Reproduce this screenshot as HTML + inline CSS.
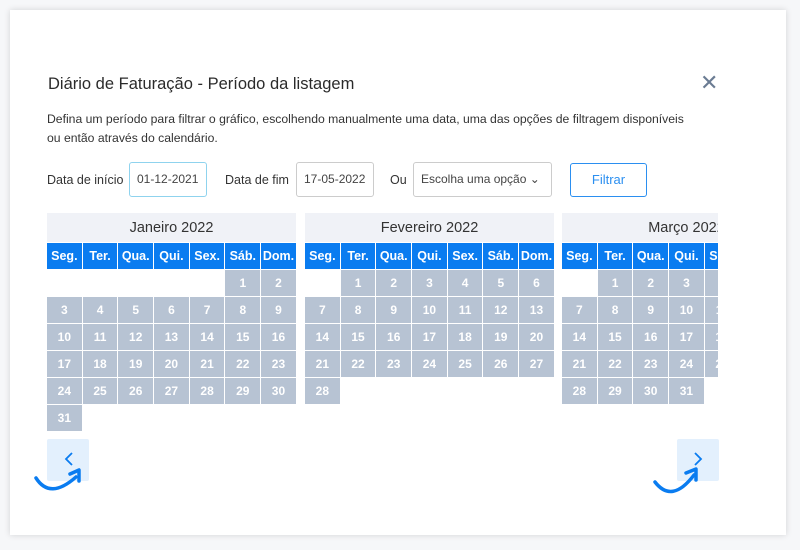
<!DOCTYPE html>
<html><head><meta charset="utf-8"><style>
*{box-sizing:border-box;margin:0;padding:0}
body{width:800px;height:550px;background:#f6f7f9;font-family:"Liberation Sans",sans-serif;position:relative;overflow:hidden}
.card{position:absolute;left:10px;top:10px;width:776px;height:525px;background:#fff;box-shadow:0 0 6px rgba(0,0,0,.15)}
.t{position:absolute;left:48px;top:75px;font-size:16.5px;color:#2b2b2b}
.x{position:absolute;left:700px;top:70px;font-size:22px;color:#6b7c93}
.d{position:absolute;left:47px;top:110px;width:700px;font-size:12.2px;color:#333;line-height:19px;white-space:nowrap}
.lbl{position:absolute;font-size:12.5px;color:#333;top:173px}
.inp{position:absolute;top:162px;height:35px;border:1px solid #ccc;border-radius:3px;font-size:12px;color:#444;padding:0 7px;line-height:33px;white-space:nowrap;overflow:hidden}
.btn{position:absolute;left:570px;top:163px;width:77px;height:34px;border:1px solid #2b8ff0;border-radius:3px;color:#2b8ff0;font-size:13px;text-align:center;line-height:32px}
.cal{position:absolute;top:213px;width:249px;overflow:hidden}
.mh{height:29px;background:#f0f2f7;text-align:center;font-size:14.5px;color:#333;line-height:30px;white-space:nowrap}
.g{display:grid;grid-template-columns:repeat(7,34.7px);gap:1px;width:249px}
.g span{background:#0a7cf0;color:#fff;font-size:12.5px;height:26px;line-height:26px;text-align:center;font-weight:bold;margin-top:1px}
.g b{background:#b7c3d3;color:#fff;font-size:12px;height:26px;line-height:26px;text-align:center}
.g i{height:26px}
.nav{position:absolute;top:439px;width:42px;height:42px;background:#e3f0fd;border-radius:2px}
</style></head><body>
<div class="card"></div>
<div class="t">Diário de Faturação - Período da listagem</div>
<div class="x">✕</div>
<div class="d">Defina um período para filtrar o gráfico, escolhendo manualmente uma data, uma das opções de filtragem disponíveis<br>ou então através do calendário.</div>
<div class="lbl" style="left:47px">Data de início</div>
<div class="inp" style="left:129px;width:78px;border-color:#8fd3ee">01-12-2021</div>
<div class="lbl" style="left:225px">Data de fim</div>
<div class="inp" style="left:296px;width:78px">17-05-2022</div>
<div class="lbl" style="left:390px">Ou</div>
<div class="inp" style="left:413px;width:139px">Escolha uma opção ⌄</div>
<div class="btn">Filtrar</div>

<div class="cal" style="left:47px"><div class="mh">Janeiro 2022</div><div class="g">
<span>Seg.</span><span>Ter.</span><span>Qua.</span><span>Qui.</span><span>Sex.</span><span>Sáb.</span><span>Dom.</span>
<i></i><i></i><i></i><i></i><i></i><b>1</b><b>2</b><b>3</b><b>4</b><b>5</b><b>6</b><b>7</b><b>8</b><b>9</b><b>10</b><b>11</b><b>12</b><b>13</b><b>14</b><b>15</b><b>16</b><b>17</b><b>18</b><b>19</b><b>20</b><b>21</b><b>22</b><b>23</b><b>24</b><b>25</b><b>26</b><b>27</b><b>28</b><b>29</b><b>30</b><b>31</b>
</div></div>

<div class="cal" style="left:305px"><div class="mh">Fevereiro 2022</div><div class="g">
<span>Seg.</span><span>Ter.</span><span>Qua.</span><span>Qui.</span><span>Sex.</span><span>Sáb.</span><span>Dom.</span>
<i></i><b>1</b><b>2</b><b>3</b><b>4</b><b>5</b><b>6</b><b>7</b><b>8</b><b>9</b><b>10</b><b>11</b><b>12</b><b>13</b><b>14</b><b>15</b><b>16</b><b>17</b><b>18</b><b>19</b><b>20</b><b>21</b><b>22</b><b>23</b><b>24</b><b>25</b><b>26</b><b>27</b><b>28</b>
</div></div>

<div class="cal" style="left:562px;width:156px"><div class="mh" style="width:249px">Março 2022</div><div class="g">
<span>Seg.</span><span>Ter.</span><span>Qua.</span><span>Qui.</span><span>Sex.</span><span>Sáb.</span><span>Dom.</span>
<i></i><b>1</b><b>2</b><b>3</b><b>4</b><b>5</b><b>6</b><b>7</b><b>8</b><b>9</b><b>10</b><b>11</b><b>12</b><b>13</b><b>14</b><b>15</b><b>16</b><b>17</b><b>18</b><b>19</b><b>20</b><b>21</b><b>22</b><b>23</b><b>24</b><b>25</b><b>26</b><b>27</b><b>28</b><b>29</b><b>30</b><b>31</b>
</div></div>

<div class="nav" style="left:47px"></div>
<div class="nav" style="left:677px"></div>
<svg width="800" height="550" style="position:absolute;left:0;top:0">
<path d="M72 453 L66 459 L72 465" fill="none" stroke="#0a7cf0" stroke-width="1.8"/>
<path d="M695 453 L701 459 L695 465" fill="none" stroke="#0a7cf0" stroke-width="1.8"/>
<path d="M36 478 Q50 500 76 477" fill="none" stroke="#0a7cf0" stroke-width="3.5" stroke-linecap="round"/>
<path d="M70 474 L79 470 L79 481" fill="none" stroke="#0a7cf0" stroke-width="3.5" stroke-linejoin="round" stroke-linecap="round"/>
<path d="M655 482 Q672 504 694 475" fill="none" stroke="#0a7cf0" stroke-width="3.5" stroke-linecap="round"/>
<path d="M686 473 L696 469 L696 480" fill="none" stroke="#0a7cf0" stroke-width="3.5" stroke-linejoin="round" stroke-linecap="round"/>
</svg>
</body></html>
